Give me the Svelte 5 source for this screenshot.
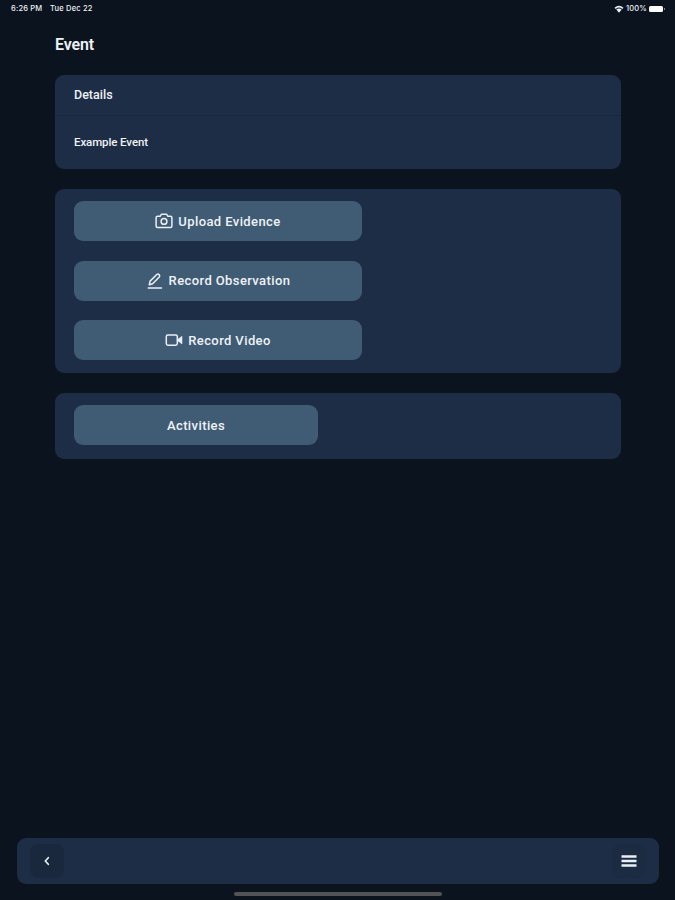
<script lang="ts">
  const eventName = "Example Event";

  const actions = [
    { icon: "camera", label: "Upload Evidence" },
    { icon: "pencil", label: "Record Observation" },
    { icon: "video", label: "Record Video" },
  ];
</script>

<div class="screen">
  <header class="status">
    <span class="time">6:26 PM</span>
    <span class="date">Tue Dec 22</span>
    <svg class="wifi" viewBox="0 0 10 8" aria-hidden="true">
      <path d="M0.5 2.7Q5-1.3 9.5 2.7L8.3 4Q5 1.2 1.7 4ZM2.3 4.5Q5 2.3 7.7 4.5L5 7.7Z" />
    </svg>
    <span>100%</span>
    <span class="battery"></span>
    <span class="nub"></span>
  </header>

  <main>
    <h1>Event</h1>

    <section class="card details">
      <h2>Details</h2>
      <p>{eventName}</p>
    </section>

    <section class="card actions">
      {#each actions as action}
        <button class="action">
          <svg class={action.icon} viewBox="0 0 18 18" aria-hidden="true">
            {#if action.icon === "camera"}
              <path d="M2.6 4.3h2.5L6.5 2.2h5l1.4 2.1h2.5a1.5 1.5 0 0 1 1.5 1.5v8.3a1.5 1.5 0 0 1-1.5 1.5H2.6a1.5 1.5 0 0 1-1.5-1.5V5.8a1.5 1.5 0 0 1 1.5-1.5Z" />
              <circle cx="9" cy="9.4" r="2.9" />
            {:else if action.icon === "pencil"}
              <path d="M3.3 12.7l.8-3.6 6.7-6.6q1.2-.9 2.3.1 1.2 1.2.2 2.4l-6.7 6.7-3.3 1ZM2.3 16h13.2" />
            {:else}
              <rect x="1.3" y="3.9" width="11" height="10.3" rx="1.6" />
              <path class="solid" d="M13 8.2l4-3v7.8l-4-3Z" />
            {/if}
          </svg>
          {action.label}
        </button>
      {/each}
    </section>

    <section class="card activities">
      <button class="action">Activities</button>
    </section>
  </main>

  <nav>
    <button class="nav-button" aria-label="Back">
      <svg viewBox="0 0 16 16" aria-hidden="true">
        <path d="M9.3 4.7L6.3 8l3 3.3" />
      </svg>
    </button>
    <button class="nav-button menu" aria-label="Menu">
      <svg viewBox="0 0 16 16" aria-hidden="true">
        <path d="M.5 3.5h15M.5 8h15M.5 12.5h15" />
      </svg>
    </button>
  </nav>
  <div class="home-indicator"></div>
</div>

<style>
  :global(body) {
    background: #0b131f;
  }

  .screen {
    box-sizing: border-box;
    display: flex;
    flex-direction: column;
    width: 675px;
    height: 900px;
    background: #0b131f;
    color: #eef2f6;
    font-family: Roboto, sans-serif;
  }

  .status {
    display: flex;
    align-items: center;
    height: 17px;
    padding: 0 10px 0 11px;
    font: 500 7.5px/17px Inter, sans-serif;
    letter-spacing: 0.2px;
  }

  .time {
    width: 39px;
  }

  .date {
    flex: 1;
  }

  .wifi {
    width: 10px;
    height: 8px;
    margin-right: 2px;
    fill: #eef2f6;
  }

  .battery {
    width: 14px;
    height: 6px;
    margin-left: 2px;
    border-radius: 1.5px;
    background: #fff;
  }

  .nub {
    width: 1px;
    height: 2px;
    margin-left: 1px;
    background: #7d838c;
  }

  main {
    flex: 1;
    padding: 0 54px 0 55px;
  }

  h1 {
    margin: 18px 0 19.5px;
    font-size: 16px;
    font-weight: 600;
    line-height: 20px;
    letter-spacing: -0.15px;
  }

  .card {
    box-sizing: border-box;
    margin-bottom: 20px;
    border-radius: 9px;
    background: #1d2d45;
  }

  .details {
    height: 94px;
  }

  h2,
  p {
    margin: 0;
    padding: 0 19px;
    font-weight: 500;
  }

  h2 {
    height: 40px;
    border-bottom: 1px solid #17263a;
    font-size: 12.5px;
    line-height: 40px;
  }

  p {
    font-size: 11.5px;
    line-height: 53px;
    letter-spacing: -0.1px;
  }

  button {
    display: flex;
    align-items: center;
    justify-content: center;
    padding: 0;
    border: 0;
    color: inherit;
    font: inherit;
  }

  .actions {
    display: flex;
    flex-direction: column;
    gap: 19.5px;
    height: 184px;
    padding: 12.5px 19px;
  }

  .action {
    width: 288px;
    height: 40px;
    flex-shrink: 0;
    gap: 5px;
    border-radius: 9px;
    background: #405c75;
    font-size: 13px;
    font-weight: 500;
    letter-spacing: 0.4px;
  }

  .activities {
    height: 66px;
    padding: 12.5px 19px;
  }

  .activities .action {
    width: 244px;
  }

  svg {
    fill: none;
    stroke: #e9eff4;
    stroke-width: 1.5;
    stroke-linecap: round;
    stroke-linejoin: round;
  }

  .status svg {
    stroke: none;
  }

  .action svg {
    width: 18px;
    height: 18px;
  }

  .solid {
    fill: #e9eff4;
    stroke-width: 0.5;
  }

  nav {
    box-sizing: border-box;
    display: flex;
    align-items: center;
    justify-content: space-between;
    height: 46px;
    margin: 0 16px 8px 17px;
    padding: 0 13px;
    border-radius: 9px;
    background: #1d2d45;
  }

  .nav-button {
    width: 34px;
    height: 34px;
    border-radius: 8px;
    background: #1a283d;
  }

  .nav-button svg {
    width: 16px;
    height: 16px;
    stroke-width: 1.7;
  }

  .menu {
    background: #1b2b42;
  }

  .menu svg {
    stroke-width: 2.6;
    stroke-linecap: butt;
  }

  .home-indicator {
    width: 208px;
    height: 4px;
    margin: 0 auto 4px;
    border-radius: 2px;
    background: #525357;
  }
</style>
